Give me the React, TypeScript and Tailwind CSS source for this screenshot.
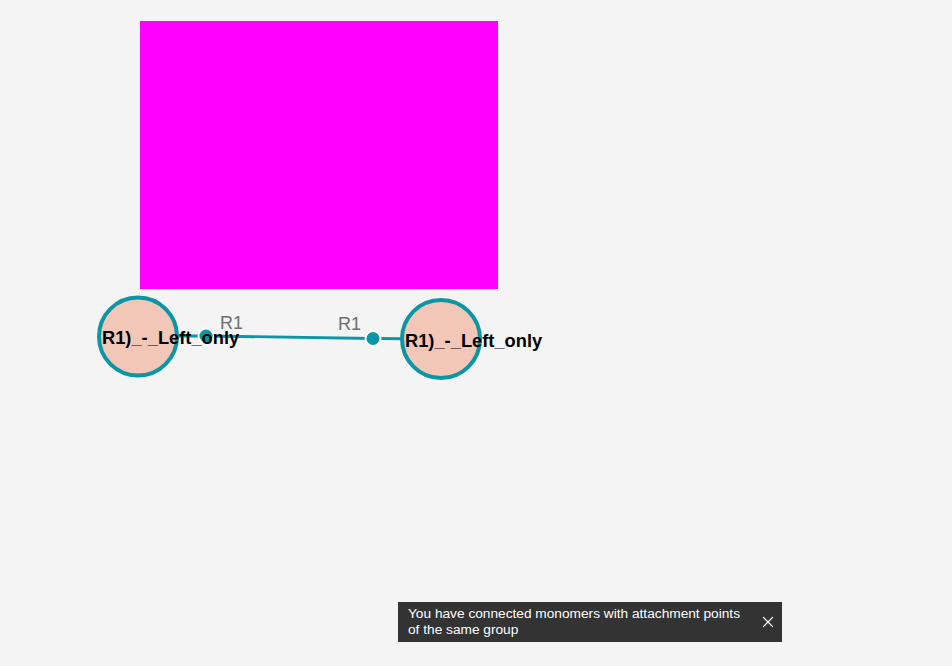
import { X } from "lucide-react";

const teal = "#0b96a6";

const monomers = [
  { cx: 138, cy: 336.5, labelX: 102, labelY: 339 },
  { cx: 441, cy: 339, labelX: 405, labelY: 342 },
];

const points = [
  { cx: 206, cy: 336, tx: 220, ty: 324 },
  { cx: 373, cy: 338.5, tx: 338, ty: 325 },
];

export default function App() {
  return (
    <div className="relative h-[666px] w-full overflow-hidden bg-[#f4f4f4] font-['Liberation_Sans',Arial,sans-serif]">
      {/* editor canvas */}
      <svg className="absolute inset-0" width={952} height={666}>
        <rect x={140} y={21} width={358} height={268} fill="#ff00ff" />

        <polyline
          points="138,336 206,336 373,338.5 441,339"
          fill="none"
          stroke={teal}
          strokeWidth={2.8}
        />

        {monomers.map((m, i) => (
          <circle
            key={i}
            cx={m.cx}
            cy={m.cy}
            r={39}
            fill="#f3c7b7"
            stroke={teal}
            strokeWidth={4}
          />
        ))}

        {points.map((p, i) => (
          <g key={i}>
            <circle cx={p.cx} cy={p.cy} r={7.5} fill={teal} stroke="#fff" strokeWidth={2} />
            <text
              x={p.tx}
              y={p.ty}
              dominantBaseline="middle"
              fontSize={18}
              fill="#6f6f6f"
            >
              R1
            </text>
          </g>
        ))}

        {monomers.map((m, i) => (
          <text
            key={i}
            x={m.labelX}
            y={m.labelY}
            dominantBaseline="middle"
            fontSize={18.3}
            fontWeight={700}
            fill="#000"
          >
            R1)_-_Left_only
          </text>
        ))}
      </svg>

      {/* notification */}
      <div className="absolute left-[398px] top-[602px] flex h-[40px] w-[384px] items-center justify-between bg-[#333333] pl-[10px] pr-[5px] text-[13.7px] leading-[16px] text-white">
        <p className="-mt-[1px]">
          You have connected monomers with attachment points
          <br />
          of the same group
        </p>
        <X className="h-[18px] w-[18px]" strokeWidth={1.6} />
      </div>
    </div>
  );
}
